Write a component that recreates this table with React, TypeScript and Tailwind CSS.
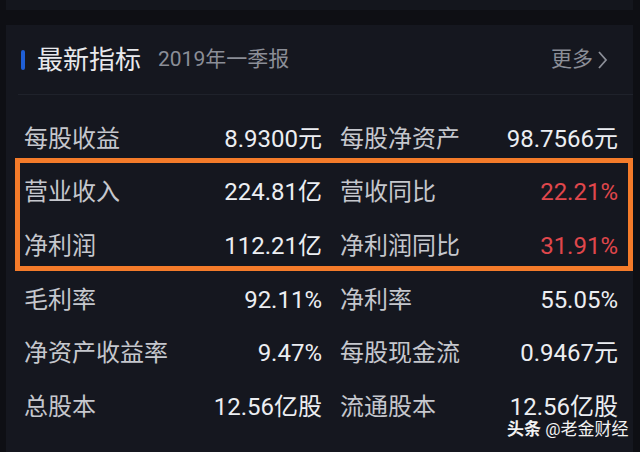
import React from "react";

const font = { fontFamily: 'Roboto, "Noto Sans CJK SC", sans-serif' };

type Row = { l1: string; v1: string; l2: string; v2: string; red?: boolean };

const rows: Row[] = [
  { l1: "每股收益", v1: "8.9300元", l2: "每股净资产", v2: "98.7566元" },
  { l1: "营业收入", v1: "224.81亿", l2: "营收同比", v2: "22.21%", red: true },
  { l1: "净利润", v1: "112.21亿", l2: "净利润同比", v2: "31.91%", red: true },
  { l1: "毛利率", v1: "92.11%", l2: "净利率", v2: "55.05%" },
  { l1: "净资产收益率", v1: "9.47%", l2: "每股现金流", v2: "0.9467元" },
  { l1: "总股本", v1: "12.56亿股", l2: "流通股本", v2: "12.56亿股" },
];

export default function App() {
  return (
    <div
      className="relative w-[640px] h-[452px] overflow-hidden bg-[#0e0f14] flex flex-col"
      style={font}
    >
      <div className="ml-[6px] mr-[7px] h-[10px] bg-[#14161d]" />
      <div className="h-[15px]" />
      <div className="flex-1 ml-[6px] mr-[7px] bg-[#15171f] flex flex-col">
        <div className="h-[70px] flex items-center ml-[12px] pr-[20px] border-b border-[#1f222b]">
          <div className="w-[4px] h-[20px] rounded-sm bg-[#1f5fd6] ml-[3px] mr-[12px]" />
          <span className="text-[26px] leading-none text-[#e8e9ec]">最新指标</span>
          <span className="ml-[17px] text-[21px] leading-none text-[#8b8e97]">2019年一季报</span>
          <span className="ml-auto text-[21px] leading-none text-[#8b8e97]">更多</span>
          <svg width="12" height="20" viewBox="0 0 12 20" className="ml-[4px] mr-[4px]">
            <path d="M2 2 L9 10 L2 18" stroke="#8b8e97" strokeWidth="1.8" fill="none" />
          </svg>
        </div>
        <div className="pt-[17px] pl-[18px] pr-[15px] flex flex-col">
          {rows.map((r, i) => (
            <div
              key={i}
              className="h-[53.6px] grid grid-cols-[298px_278px] gap-x-[18px] items-center"
            >
              <div className="flex items-center justify-between">
                <span className="text-[24px] leading-none text-[#c5c7cd]">{r.l1}</span>
                <span className="text-[24px] leading-none text-[#eceef2]">{r.v1}</span>
              </div>
              <div className="flex items-center justify-between">
                <span className="text-[24px] leading-none text-[#c5c7cd]">{r.l2}</span>
                <span
                  className={
                    "text-[24px] leading-none " +
                    (r.red ? "text-[#e0474c]" : "text-[#eceef2]")
                  }
                >
                  {r.v2}
                </span>
              </div>
            </div>
          ))}
        </div>
      </div>
      <div className="absolute left-[15px] top-[158px] w-[618px] h-[113px] border-[5px] border-[#f47b2a]" />
      <div className="absolute left-[507px] top-[421px] text-[17px] leading-none text-[#f2f2f2] whitespace-nowrap">
        <span className="font-bold">头条</span> @老金财经
      </div>
    </div>
  );
}
